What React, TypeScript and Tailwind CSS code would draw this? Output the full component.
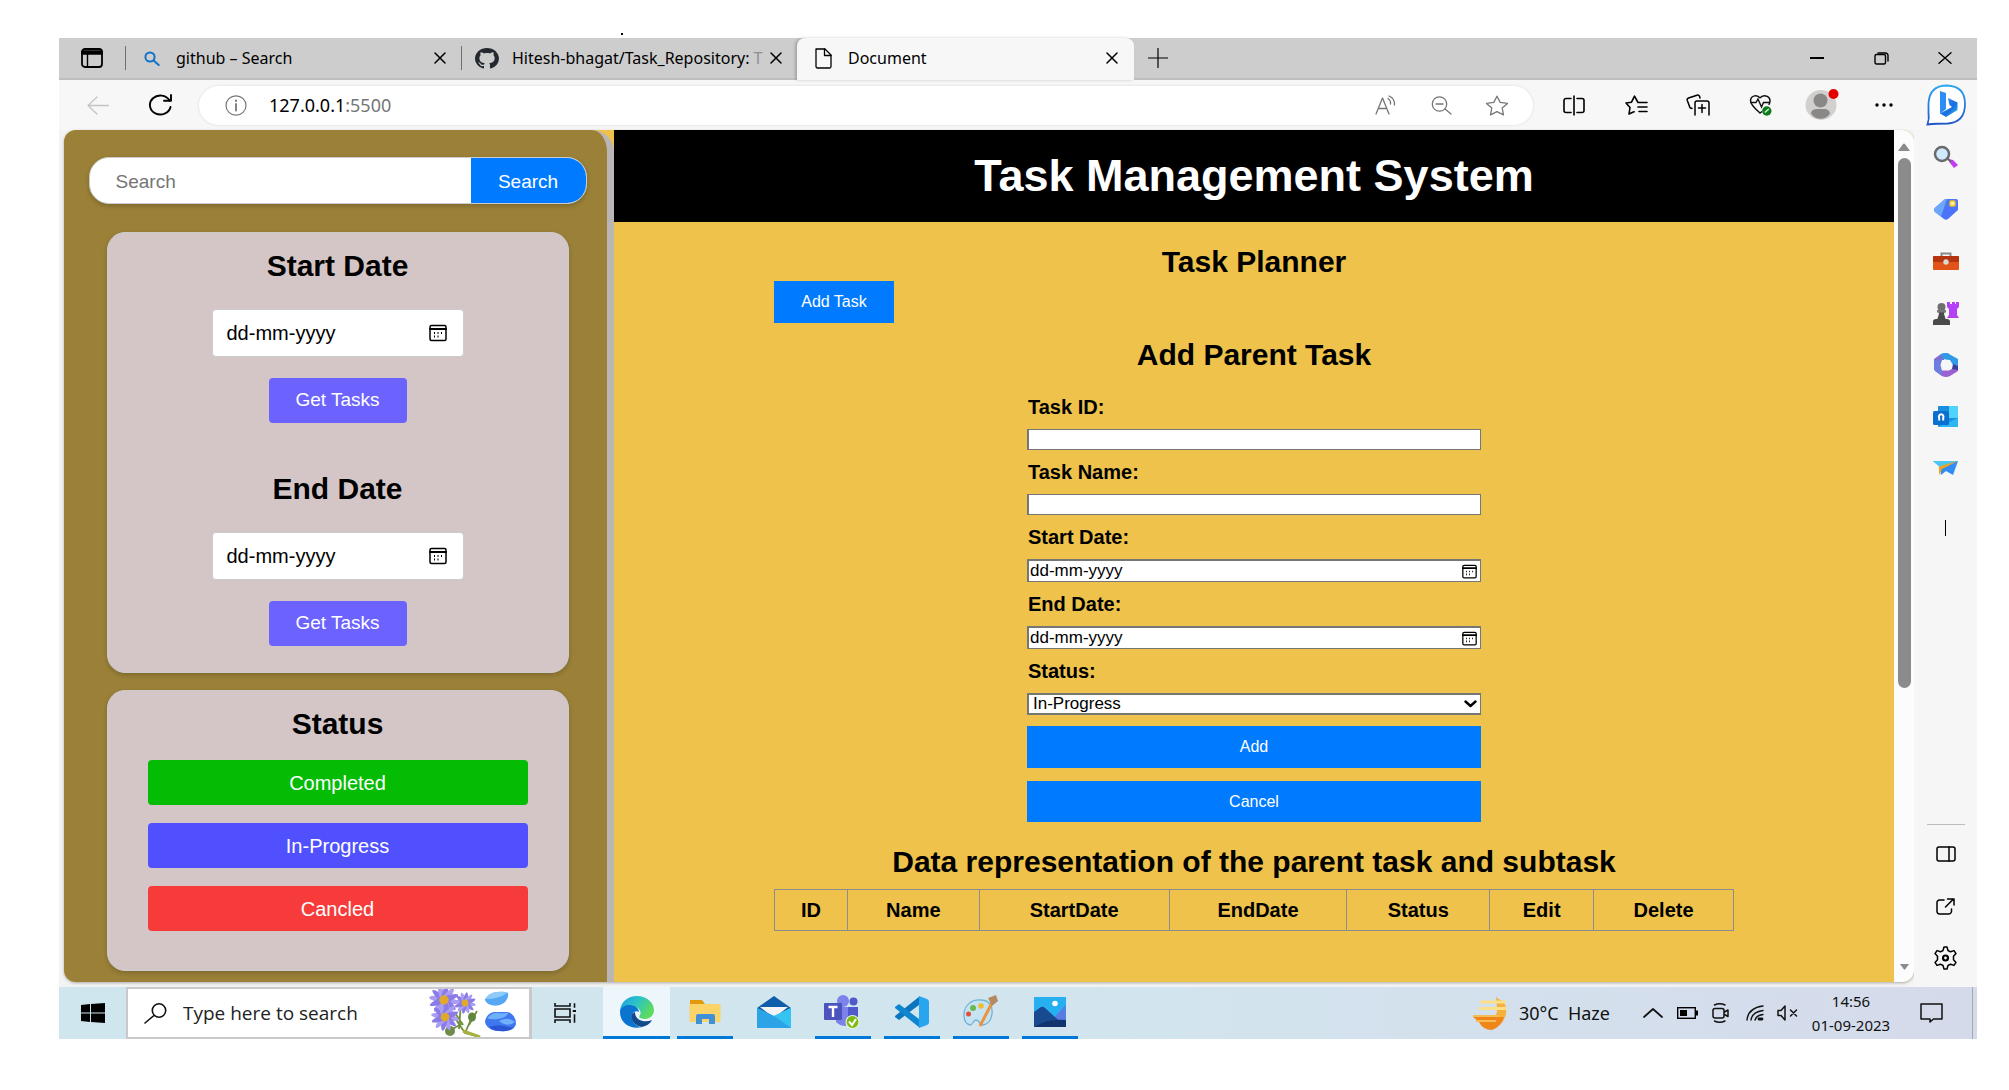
import type { ReactNode } from "react";

type IconProps = { children: ReactNode; w?: number; h?: number; box?: string; sw?: number };

function Line({ children, w = 24, h = 24, box = "0 0 24 24", sw = 1.6 }: IconProps) {
  return (
    <svg width={w} height={h} viewBox={box} fill="none" stroke="currentColor" strokeWidth={sw} strokeLinejoin="round" strokeLinecap="round" aria-hidden="true">
      {children}
    </svg>
  );
}

function Art({ children, w = 26, h = 24, box = "0 0 26 24" }: IconProps) {
  return (
    <svg width={w} height={h} viewBox={box} aria-hidden="true">
      {children}
    </svg>
  );
}

function CloseIcon() {
  return (
    <Line w={12} h={12} box="0 0 12 12" sw={1.5}>
      <path d="M1 1l10 10M11 1L1 11" />
    </Line>
  );
}

function CalendarIcon({ small }: { small?: boolean }) {
  return (
    <Line w={small ? 15 : 18} h={small ? 15 : 18} box="0 0 18 18" sw={1.5}>
      <rect x="1" y="1.5" width="16" height="15" rx="1.5" />
      <path d="M1 5h16" strokeWidth="2" />
      <path d="M5 9h1M8.5 9h1M12 9h1M5 12.500h1M8.500 12.500h1" strokeWidth="2" strokeLinecap="butt" />
    </Line>
  );
}

/* ---------- browser chrome ---------- */

function TabStrip() {
  return (
    <div className="flex h-[42px] border-b-2 border-[#bebebe] bg-[#cdcdcd]">
      <button aria-label="Tab actions" className="flex w-[66px] shrink-0 items-center justify-center">
        <Line w={22} h={20} box="0 0 22 20" sw={1.8}>
          <rect x="1" y="1" width="20" height="18" rx="3" />
          <path d="M2 4.500h18" strokeWidth="4.500" />
          <path d="M6.500 5v14" strokeWidth="1.400" />
        </Line>
      </button>
      <div className="my-2 w-px shrink-0 bg-[#707070]" />
      <div className="flex w-[335px] shrink-0 items-center pr-[15px] pl-[18px]">
        <span className="text-[#1173c7]">
          <Line w={16} h={15} box="0 0 16 15" sw={2}>
            <circle cx="6" cy="6" r="4.600" />
            <path d="M9.700 9.500l5 4.500" />
          </Line>
        </span>
        <span className="ml-4 flex-1 text-base">github – Search</span>
        <button aria-label="Close tab"><CloseIcon /></button>
      </div>
      <div className="my-2 w-px shrink-0 bg-[#707070]" />
      <div className="flex w-[335px] shrink-0 items-center pr-[15px] pl-[13px]">
        <svg width="24" height="21" viewBox="0 0 16 16" preserveAspectRatio="none" fill="#24292f" aria-hidden="true">
          <path d="M8 0C3.580 0 0 3.580 0 8c0 3.540 2.290 6.530 5.470 7.590.4.070.55-.17.55-.38 0-.19-.01-.82-.01-1.490-2.010.37-2.530-.49-2.690-.94-.09-.23-.48-.94-.82-1.130-.28-.15-.68-.52-.01-.53.63-.01 1.080.58 1.230.82.72 1.210 1.870.87 2.330.66.07-.52.28-.87.51-1.070-1.780-.2-3.640-.89-3.640-3.950 0-.87.31-1.590.82-2.150-.08-.2-.36-1.020.08-2.120 0 0 .67-.21 2.200.82.64-.18 1.320-.27 2-.27s1.360.09 2 .27c1.530-1.040 2.200-.82 2.200-.82.44 1.100.16 1.920.08 2.120.51.56.82 1.270.82 2.150 0 3.070-1.870 3.750-3.650 3.950.29.25.54.73.54 1.480 0 1.070-.01 1.930-.01 2.200 0 .21.15.46.55.38A8.010 8.010 0 0016 8c0-4.420-3.580-8-8-8z" />
        </svg>
        <span className="ml-[13px] min-w-0 flex-1 text-base whitespace-nowrap">
          Hitesh-bhagat/Task_Repository: <span className="text-[#909090]">T</span>
        </span>
        <button aria-label="Close tab"><CloseIcon /></button>
      </div>
      <div className="-mb-0.5 flex w-[337px] shrink-0 items-center rounded-t-lg bg-[#f7f7f7] pr-4 pb-0.5 pl-[18px] shadow-[-2px_0_3px_rgba(0,0,0,0.2)]">
        <Line w={17} h={21} box="0 0 17 21" sw={1.3}>
          <path d="M1 1h9l6 6v11.500a1.500 1.500 0 0 1-1.500 1.500h-12A1.500 1.500 0 0 1 1 18.500z" />
          <path d="M9.500 1v6.500H16" />
        </Line>
        <span className="ml-4 flex-1 text-base">Document</span>
        <button aria-label="Close tab"><CloseIcon /></button>
      </div>
      <button aria-label="New tab" className="flex w-[47px] items-center justify-center">
        <Line w={20} h={20} box="0 0 20 20" sw={1.2}><path d="M10 0.500v19M0.500 10h19" /></Line>
      </button>
      <div className="ml-auto flex">
        <button aria-label="Minimize" className="flex w-16 items-center justify-center">
          <span className="h-0.5 w-[14px] bg-black" />
        </button>
        <button aria-label="Restore" className="flex w-16 items-center justify-center">
          <Line w={15} h={13} box="0 0 15 13" sw={1.4}>
            <rect x="1" y="2.500" width="10.500" height="9.500" rx="1.500" />
            <path d="M4 1h7.500A2.500 2.500 0 0 1 14 3.500V9" />
          </Line>
        </button>
        <button aria-label="Close" className="flex w-16 items-center justify-center">
          <Line w={14} h={12} box="0 0 14 12" sw={1.4}><path d="M1 0.700l12 10.600M13 0.700L1 11.300" /></Line>
        </button>
      </div>
    </div>
  );
}

const TOOL = "flex w-[62px] items-center justify-center";

function Toolbar() {
  return (
    <div className="flex h-[50px] items-center bg-[#f7f7f7]">
      <button aria-label="Back" className="ml-2 flex w-[62px] items-center justify-center text-[#c4c4c4]">
        <Line w={22} h={19} box="0 0 22 19" sw={1.3}><path d="M10 1L1 9.500l9 8.500M1 9.500h20.500" /></Line>
      </button>
      <button aria-label="Reload" className={TOOL}>
        <Line w={25} h={22} box="0 0 25 22" sw={1.9}>
          <path d="M22.500 13A10.400 9.500 0 1 1 21.500 6.500" />
          <path d="M23 1v5.800h-7" />
        </Line>
      </button>
      <div className="ml-2 flex h-[39px] flex-1 items-center rounded-[20px] bg-white pr-[9px] pl-[26px] shadow-[0_0_3px_rgba(0,0,0,0.12)]">
        <span className="text-[#767676]">
          <Line w={22} h={21} box="0 0 22 21" sw={1.2}>
            <ellipse cx="11" cy="10.500" rx="10" ry="9.700" />
            <path d="M11 9v6.500" strokeWidth="1.800" />
            <path d="M11 5.500v.5" strokeWidth="2" />
          </Line>
        </span>
        <span className="ml-[22px] text-lg">127.0.0.1<span className="text-[#767676]">:5500</span></span>
        <div className="ml-auto flex text-[#767676]">
          <button aria-label="Read aloud" className="flex w-[55px] items-center justify-center">
            <Line w={24} h={20} box="0 0 24 20" sw={1.3}>
              <path d="M1 19L7.500 3 14 19M3.200 13.500h8.600" />
              <path d="M13 3.500q3 2 2.500 5.500M14 1q6 2.500 5.500 9" />
            </Line>
          </button>
          <button aria-label="Zoom out" className="flex w-[55px] items-center justify-center">
            <Line w={21} h={19} box="0 0 21 19" sw={1.3}>
              <circle cx="8.500" cy="8" r="7.200" />
              <path d="M5 8h7M14 13l6 5" />
            </Line>
          </button>
          <button aria-label="Favorite" className="flex w-[55px] items-center justify-center">
            <Line w={24} h={21} box="0 0 24 21" sw={1.3}>
              <path d="M12 1.200l3.200 6.200 7.300 1-5.300 4.600 1.300 6.900L12 16.700l-6.500 3.200 1.300-6.900L1.500 8.400l7.300-1z" />
            </Line>
          </button>
        </div>
      </div>
      <div className="ml-[10px] flex">
        <button aria-label="Split screen" className={TOOL}>
          <Line w={22} h={21} box="0 0 22 21" sw={1.6}>
            <path d="M8 3.500H3A2 2 0 0 0 1 5.500v10a2 2 0 0 0 2 2h5M14 3.500h5a2 2 0 0 1 2 2v10a2 2 0 0 1-2 2h-5M11 1v19" />
          </Line>
        </button>
        <button aria-label="Favorites" className={TOOL}>
          <Line w={23} h={21} box="0 0 23 21" sw={1.6}>
            <path d="M14 7.500h-1L9.500 1.200 6.500 7.200 1 8l4 4.500-1 6.500 5-2.300M14.500 7.500H22M13 12h9M14 16.500h8" />
          </Line>
        </button>
        <button aria-label="Collections" className={TOOL}>
          <Line w={24} h={22} box="0 0 24 22" sw={1.5}>
            <path d="M9 21V9a2 2 0 0 1 2-2h10a2 2 0 0 1 2 2v12M12.500 14h7M16 10.500v8" />
            <path d="M6 14.500l-2-.8L1.300 6.500A2 2 0 0 1 2.500 4L11 1.200A2 2 0 0 1 13.500 2.300L14 4" />
          </Line>
        </button>
        <button aria-label="Browser essentials" className={TOOL}>
          <Art w={23} h={22} box="0 0 23 22">
            <path d="M11 4C8.500.5 2 1 1.500 6.500c0 4.500 5 8.500 9.500 12.500l2-1.500M11 4c2.500-3.500 10-3 10 3 0 1.500-.5 2.700-1.200 3.900" fill="none" stroke="#111" strokeWidth="1.500" />
            <path d="M1.500 8.500H7L9 5l3.500 8 2-4.500h6.500" fill="none" stroke="#111" strokeWidth="1.400" />
            <circle cx="17.800" cy="17" r="4.700" fill="#0f7b1c" />
            <path d="M15.800 18.500l4-3.500" stroke="#d9f2d9" strokeWidth="1.400" />
          </Art>
        </button>
        <button aria-label="Profile" className={TOOL}>
          <Art w={34} h={34} box="0 0 34 34">
            <ellipse cx="16" cy="17" rx="15.500" ry="15" fill="#d2d0ce" />
            <circle cx="15.500" cy="12.500" r="7" fill="#8a8886" />
            <path d="M6 25.500c1-5 5-4.500 9.500-4.500s8.500-.5 9.500 4.500c-4 7-15 7-19 0z" fill="#8a8886" />
            <circle cx="28.500" cy="6" r="5" fill="#e50000" />
          </Art>
        </button>
        <button aria-label="More" className={TOOL}>
          <Art w={20} h={4} box="0 0 20 4">
            <circle cx="3" cy="2" r="1.700" /><circle cx="10" cy="2" r="1.700" /><circle cx="17" cy="2" r="1.700" />
          </Art>
        </button>
        <button aria-label="Bing chat" className={TOOL}>
          <Art w={40} h={42} box="0 0 40 42">
            <defs>
              <linearGradient id="bingB" x1="0" y1="0" x2="1" y2="1"><stop offset="0" stopColor="#2b8df5" /><stop offset="0.600" stopColor="#1b6fe0" /><stop offset="1" stopColor="#2bd0f0" /></linearGradient>
              <linearGradient id="bingR" x1="0" y1="0" x2="0" y2="1"><stop offset="0" stopColor="#2fa9ee" /><stop offset="1" stopColor="#1f55c8" /></linearGradient>
            </defs>
            <path d="M1.500 40.500q2-6 1-12V20Q3 1.500 21 1.500 39 2 39 20t-17 19.500q-12 0-20.500 1z" fill="#fff" stroke="url(#bingR)" strokeWidth="1.800" />
            <path d="M14 7l6 2v16l-6 5z" fill="#2b8df5" />
            <path d="M22 14l9.500 4.500v7.500L20 33l-6-3.500L26 23l-2.500-2z" fill="url(#bingB)" />
          </Art>
        </button>
      </div>
    </div>
  );
}

function SideRail() {
  const cell = "flex h-[52px] w-full items-center justify-center";
  return (
    <nav aria-label="Sidebar" className="flex w-[63px] shrink-0 flex-col items-center bg-[#f6f6f6] pt-px pb-[3px]">
      <button aria-label="Search" className={cell}>
        <Art>
          <path d="M16 14l4 1 5 5-4 3-4-5z" fill="#c23cf5" />
          <path d="M14 13l4 4" stroke="#666" strokeWidth="2" />
          <circle cx="9" cy="9" r="7" fill="#cfeafc" stroke="#6a6a6a" strokeWidth="2.500" />
        </Art>
      </button>
      <button aria-label="Shopping" className={cell}>
        <Art>
          <path d="M12 2h11a2 2 0 0 1 2 2v9L15 22q-2 1.500-4 0l-9-7q-2-2 0-4z" fill="#4b74f8" />
          <path d="M1.500 11q-1.500 2 .5 4l6 4.500L14 2h-2z" fill="#6ea6fb" />
          <rect x="17" y="4" width="5" height="5" rx="1" fill="#fff3b0" stroke="#f0c020" strokeWidth="1.500" />
        </Art>
      </button>
      <button aria-label="Tools" className={cell}>
        <Art>
          <path d="M8.500 8V4.500h9V8" fill="none" stroke="#8a8a8a" strokeWidth="2" />
          <rect x="0" y="7" width="26" height="14" rx="1" fill="#e2531a" />
          <path d="M0 8a1 1 0 0 1 1-1h24a1 1 0 0 1 1 1v5H0z" fill="#b5330f" />
          <circle cx="13" cy="13" r="2.700" fill="#d8d8d8" />
        </Art>
      </button>
      <button aria-label="Games" className={cell}>
        <Art>
          <path d="M14 1h3v2h2V1h3v2h1V1h3v5l-2 2v6l2 3H14l2-3V8l-2-2z" fill="#b53ff5" />
          <path d="M5 10h7l-1 3 2 6H4l2-6zM0 20.500q0-2.500 3-2.500h11q3 0 3 2.500V24H0z" fill="#4a4a4a" />
          <circle cx="8.500" cy="6" r="4" fill="#6f6f6f" />
          <rect x="4" y="9" width="9" height="2.500" fill="#777" />
        </Art>
      </button>
      <button aria-label="Microsoft 365" className={cell}>
        <Art>
          <path d="M8 1l8-1-5 5v7l-3 6-7-1V6z" fill="#7b6fd6" />
          <path d="M8 1q4-2 8 0l9 5v8l-5-1-4-6-6-1z" fill="#2f9be6" />
          <path d="M25 12v6l-8 5q-4 2-8 0l-7-5 7-1 8 0z" fill="#9a62d0" />
          <path d="M1 7v10l8 6 0-6-1-9z" fill="#6c7fe0" />
          <path d="M9 7h8l3 5-4 5.500H9L7.500 12z" fill="#f6f6f6" />
          <path d="M20 11l5 2v4l-6-1z" fill="#3c3fa0" />
        </Art>
      </button>
      <button aria-label="Outlook" className={cell}>
        <Art>
          <rect x="5" y="1" width="20" height="21" rx="1" fill="#1a8fe0" />
          <path d="M16 1h9v12h-9z" fill="#50d3fb" />
          <path d="M5 22l20-9v9z" fill="#2cb6f2" />
          <rect x="0" y="6" width="16" height="14" rx="1.500" fill="#0a6fd0" />
          <path d="M6.200 15.500v-2.800a2.300 2.300 0 1 1 4 0v2.800" fill="none" stroke="#fff" strokeWidth="2" />
        </Art>
      </button>
      <button aria-label="Drop" className={cell}>
        <Art>
          <path d="M0 4h25l-5 14-7-4-5 4-1-8z" fill="#2f8df5" />
          <path d="M0 4h25l-18 6z" fill="#4cc8f2" />
          <path d="M25 4L6 9.500v9L9 12z" fill="#f5a11a" />
        </Art>
      </button>
      <div className="mt-[25px] h-4 w-px bg-black" />
      <div className="mt-auto h-px w-[38px] bg-[#bdbdbd]" />
      <div className="h-[3px]" />
      <button aria-label="Hide sidebar" className={cell}>
        <Line w={20} h={16} box="0 0 20 16" sw={1.5}><rect x="1" y="1" width="18" height="14" rx="2" /><path d="M13 1v14" /></Line>
      </button>
      <button aria-label="Open link" className={cell}>
        <Line w={19} h={17} box="0 0 19 17" sw={1.5}>
          <path d="M8 2H3.500A2.500 2.500 0 0 0 1 4.500v9A2.500 2.500 0 0 0 3.500 16h9a3 3 0 0 0 3-2.500V11M9.500 9L17 1.500M11.500 1H18v6" />
        </Line>
      </button>
      <button aria-label="Settings" className={cell}>
        <Line w={25} h={24} sw={1.5}>
          <path d="M9.500 4.500L10.500 1h3l1 3.500 2.500 1.300 3.500-1.200 2 3-2.500 2.700v3.400l2.500 2.700-2 3-3.500-1.200-2.500 1.300-1 3.500h-3l-1-3.500L7 18.200l-3.500 1.200-2-3L4 13.700v-3.400L1.500 7.600l2-3L7 5.800z" />
          <circle cx="12" cy="12" r="2.500" strokeWidth="2.200" />
        </Line>
      </button>
    </nav>
  );
}

/* ---------- page ---------- */

function DateFilter({ title, id }: { title: string; id: string }) {
  return (
    <section className="flex flex-col items-center">
      <h2 className="text-[30px] leading-9 font-bold"><label htmlFor={id}>{title}</label></h2>
      <div className="mt-[25px] flex h-[48px] w-[252px] items-center rounded border border-[#ccc] bg-white pr-4 pl-[14px]">
        <input id={id} placeholder="dd-mm-yyyy" className="min-w-0 flex-1 bg-transparent text-xl outline-none placeholder:text-black" />
        <button aria-label={`Pick ${title}`}><CalendarIcon /></button>
      </div>
      <button className="mt-[21px] h-[45px] w-[138px] rounded bg-[#6c63ff] text-[19px] text-white">Get Tasks</button>
    </section>
  );
}

function FilterPanel() {
  const card = "mx-auto w-[462px] rounded-[18px] border border-[#ccc] bg-[#d4c6c7] shadow-[0_2px_5px_rgba(0,0,0,0.2)]";
  const status = "h-[45px] rounded text-xl text-white";
  return (
    <aside className="w-[550px] shrink-0 rounded-tr-[22px] border-r-[7px] border-[#bbb6b6] bg-[#9b8138] pt-[27px] pb-[11px] pl-1">
      <form className="mx-auto flex h-[47px] w-[498px] overflow-hidden rounded-[20px] border border-[#ccc] bg-white shadow-[0_2px_5px_rgba(0,0,0,0.2)]">
        <input aria-label="Search" placeholder="Search" className="min-w-0 flex-1 pt-[3px] pl-[26px] text-[19px] outline-none placeholder:text-[#757575]" />
        <button type="button" className="w-[115px] bg-[#007bff] pt-[3px] text-[19px] text-white">Search</button>
      </form>
      <div className={`${card} mt-[28px] pt-[15px] pb-[26px]`}>
        <DateFilter title="Start Date" id="filter-start" />
        <hr className="mx-auto mt-[24px] mb-[22px] w-[360px] border-t-2 border-[#cec5c6]" />
        <DateFilter title="End Date" id="filter-end" />
      </div>
      <div className={`${card} mt-[17px] flex flex-col px-10 pt-[15px] pb-[39px]`}>
        <h2 className="mb-[18px] text-center text-[30px] leading-9 font-bold">Status</h2>
        <div className="flex flex-col gap-[18px]">
          <button className={`${status} bg-[#04bc04]`}>Completed</button>
          <button className={`${status} bg-[#5050ff]`}>In-Progress</button>
          <button className={`${status} bg-[#f73b3b]`}>Cancled</button>
        </div>
      </div>
    </aside>
  );
}

const LABEL = "block py-[10px] pl-px text-xl leading-6 font-bold";

function TextField({ label, id }: { label: string; id: string }) {
  return (
    <div>
      <label htmlFor={id} className={LABEL}>{label}</label>
      <input id={id} className="block h-[21px] w-full border border-l-2 border-[#767676] bg-white px-1 text-[17px] outline-none" />
    </div>
  );
}

function DateField({ label, id }: { label: string; id: string }) {
  return (
    <div>
      <label htmlFor={id} className={LABEL}>{label}</label>
      <div className="flex h-[23px] items-center border border-t-2 border-l-2 border-[#767676] bg-white pr-[3px] pl-px">
        <input id={id} placeholder="dd-mm-yyyy" className="h-5 min-w-0 flex-1 text-[17px] outline-none placeholder:text-black" />
        <button type="button" aria-label="Pick date"><CalendarIcon small /></button>
      </div>
    </div>
  );
}

const COLUMNS: [string, string][] = [
  ["ID", "w-[73px]"],
  ["Name", "w-[132px]"],
  ["StartDate", "w-[190px]"],
  ["EndDate", "w-[178px]"],
  ["Status", "w-[143px]"],
  ["Edit", "w-[104px]"],
  ["Delete", "w-[140px]"],
];

function Planner() {
  const blue = "bg-[#007bff] text-base text-white";
  return (
    <main className="min-w-0 flex-1">
      <h1 className="flex h-[92px] items-center justify-center bg-black text-[45px] font-bold text-white">Task Management System</h1>
      <div className="mx-auto w-3/4 pt-[22px] pb-12">
        <h2 className="text-center text-[30px] leading-9 font-bold">Task Planner</h2>
        <button className={`${blue} mt-px block h-[42px] w-[120px]`}>Add Task</button>
        <h2 className="mt-[14px] text-center text-[30px] leading-9 font-bold">Add Parent Task</h2>
        <form className="mx-auto mt-3 w-[454px]">
          <TextField label="Task ID:" id="task-id" />
          <TextField label="Task Name:" id="task-name" />
          <DateField label="Start Date:" id="task-start" />
          <DateField label="End Date:" id="task-end" />
          <label htmlFor="task-status" className={LABEL}>Status:</label>
          <div className="relative">
            <select id="task-status" className="block h-[22px] w-full appearance-none border border-y-2 border-l-2 border-[#767676] bg-white pl-1 text-[17px] leading-[18px]">
              <option>In-Progress</option>
              <option>Completed</option>
              <option>Cancled</option>
            </select>
            <span className="pointer-events-none absolute top-[7px] right-[4px]">
              <Line w={13} h={8} box="0 0 13 8" sw={2.4}><path d="M1.500 1.500l5 4.500 5-4.500" /></Line>
            </span>
          </div>
          <button type="button" className={`${blue} mt-[11px] block h-[42px] w-full`}>Add</button>
          <button type="button" className={`${blue} mt-[13px] block h-[41px] w-full`}>Cancel</button>
        </form>
        <h2 className="mt-[22px] text-center text-[30px] leading-9 font-bold whitespace-nowrap">Data representation of the parent task and subtask</h2>
        <table className="mt-[9px] w-full border-collapse">
          <thead>
            <tr className="h-[41px]">
              {COLUMNS.map(([name, width]) => (
                <th key={name} scope="col" className={`${width} border border-[#8d8d8d] text-xl leading-6 font-bold`}>{name}</th>
              ))}
            </tr>
          </thead>
        </table>
      </div>
    </main>
  );
}

function ScrollTrack() {
  return (
    <div className="flex w-5 shrink-0 flex-col items-center bg-[#fcfcfc] pt-[13px] pb-3" aria-hidden="true">
      <Art w={12} h={8} box="0 0 12 8"><path d="M0 8l5-7q1-1 2 0l5 7z" fill="#8b8b8b" /></Art>
      <div className="mt-[7px] h-[530px] w-[13px] rounded-full bg-[#8b8b8b]" />
      <span className="mt-auto"><Art w={11} h={6} box="0 0 12 8"><path d="M0 0l5 7q1 1 2 0l5-7z" fill="#8b8b8b" /></Art></span>
    </div>
  );
}

/* ---------- task bar ---------- */

function AppButton({ label, open = true, children }: { label: string; open?: boolean; children: ReactNode }) {
  return (
    <button aria-label={label} className="flex w-[69px] flex-col items-center">
      <span className="flex flex-1 items-center justify-center">{children}</span>
      <span className={open ? "h-[3px] w-14 bg-[#0078d7]" : "h-[3px] w-14"} />
    </button>
  );
}

const PETALS = [0, 30, 60, 90, 120, 150];

function Daisy({ x, y, r }: { x: number; y: number; r: number }) {
  return (
    <g transform={`translate(${x} ${y})`}>
      {PETALS.map((a) => (
        <ellipse key={a} rx={r} ry={r / 4.5} fill={a % 60 ? "#8a7be8" : "#a99cf3"} transform={`rotate(${a + 10})`} />
      ))}
      <circle r={r / 3.2} fill="#e0a92c" />
    </g>
  );
}

function FlowerArt() {
  return (
    <Art w={92} h={48} box="0 0 92 48">
      <path d="M18 14L38 44l15 4M34 14l-2 26M45 28l-7 16M22 42l14-8M28 24l8 12M50 22l-8 14" stroke="#6f8f3a" strokeWidth="1.800" fill="none" />
      <path d="M36 42l17 6" stroke="#a9b040" strokeWidth="3" />
      <ellipse cx="45" cy="28" rx="4" ry="4.500" fill="#62853f" />
      <ellipse cx="23" cy="42" rx="5" ry="5" fill="#6e8b4c" />
      <Daisy x={17} y={11} r={15} />
      <Daisy x={38} y={14} r={11} />
      <Daisy x={18} y={28} r={14} />
      <path d="M58 10q4-6 12-7 8-1 11 1 1 5-4 10-6 4-13 2-6-2-6-6z" fill="#56a8f5" />
      <path d="M58 10q5-7 12-7 8-1 10 1-8 6-22 6z" fill="#8ecbfb" />
      <path d="M58 32q2-8 9-9h14q8 3 8 12-1 6-10 7-12 1-17-3-4-3-4-7z" fill="#3f78ee" />
      <path d="M60 29q6-6 12-5t10-1q-3 6-11 7-7 1-11-1zM72 32q9-5 16 1-7 6-16-1z" fill="#6fb0fb" />
      <path d="M62 38q8-3 15-1t10 1q-5 5-13 4-8 0-12-4z" fill="#2c55d6" />
    </Art>
  );
}

function Taskbar() {
  const tray = "flex w-[34px] items-center justify-center";
  return (
    <footer className="flex h-[52px] bg-linear-to-r from-[#cfe6ee] via-[#d2e5ef] via-55% to-[#d5daea] font-['Noto_Sans','Open_Sans',sans-serif] text-[#111]">
      <button aria-label="Start" className="flex w-[67px] shrink-0 items-center justify-center">
        <Art w={24} h={20} box="0 0 24 20"><path d="M0 2l9-1v8.500H0zM10 1l14-1v9.500H10zM0 10.500h9V19l-9-1zM10 10.500h14V20l-14-1z" fill="#000" /></Art>
      </button>
      <label className="flex w-[406px] shrink-0 items-center border-2 border-r-[3px] border-[#c9c9cb] bg-white pr-[10px] pl-4">
        <Line w={23} h={21} box="0 0 23 21" sw={1.6}><circle cx="15" cy="7.500" r="6.700" /><path d="M10 12.500l-9 7.500" /></Line>
        <input placeholder="Type here to search" className="ml-[16px] w-0 min-w-0 flex-1 font-['Open_Sans',sans-serif] text-[19px] outline-none placeholder:text-[#222]" />
        <FlowerArt />
      </label>
      <button aria-label="Task view" className="mr-[6px] flex w-[65px] shrink-0 items-center justify-center">
        <Line w={22} h={20} box="0 0 22 20" sw={1.6}>
          <path d="M1 .5V3h15V.5M1 6h15v8H1zM1 19.500V17h15v2.500M20.500 1v3M20.500 12v7" strokeLinecap="square" strokeLinejoin="miter" />
          <path d="M20.500 7v2" strokeWidth="3.500" strokeLinecap="butt" />
        </Line>
      </button>
      <button aria-label="Microsoft Edge" className="flex w-[67px] shrink-0 flex-col items-stretch bg-[#edf6fa]">
        <span className="flex flex-1 items-center justify-center">
          <Art w={34} h={32} box="0 0 34 32">
            <defs>
              <linearGradient id="edgeTop" x1="0" y1="0" x2="1" y2="0.500"><stop offset="0" stopColor="#1b9de2" /><stop offset="0.500" stopColor="#2bc3c8" /><stop offset="1" stopColor="#5edb5b" /></linearGradient>
            </defs>
            <path d="M0 16C0 6 8 0 17 0c10 0 17 7 17 14 0 6-5 9-9 9-5 0-7-2-5-4 2-3-1-8-6-8C7 11 0 13 0 16z" fill="url(#edgeTop)" />
            <path d="M0 16C0 12 4 9 9 9c7 0 10 4 10 7-3-2-8 1-7 6 1 6 6 9 10 9C10 34 0 27 0 16z" fill="#0b74d1" />
            <path d="M12 18c-2 6 3 12 10 13 4-1 8-3 10-7-7 3-17 1-17-8z" fill="#124a8c" />
          </Art>
        </span>
        <span className="h-[3px] bg-[#0078d7]" />
      </button>
      <AppButton label="File Explorer">
        <Art w={32} h={24} box="0 0 32 24">
          <path d="M1 0h12l3 4v4H1z" fill="#e29a0c" />
          <rect x="0.500" y="4" width="31" height="18" rx="1" fill="#fbd469" />
          <path d="M7 24v-8q0-2 2-2h15q2 0 2 2v8h-6v-5h-7v5z" fill="#3f8fd9" />
        </Art>
      </AppButton>
      <AppButton label="Mail" open={false}>
        <Art w={34} h={32} box="0 0 34 32">
          <path d="M0 12L17 0l17 12v6H0z" fill="#0f5ea9" />
          <path d="M3 11h28L17 22z" fill="#f4f4f4" />
          <path d="M0 12l17 8 17-8v20H0z" fill="#38b4ee" />
          <path d="M17 20l17 12V12z" fill="#35c3f1" />
          <path d="M17 20l17 12H0V12z" fill="#2ba3e6" />
        </Art>
      </AppButton>
      <AppButton label="Teams">
        <Art w={40} h={34} box="0 0 40 34">
          <circle cx="20" cy="6" r="6" fill="#7b83eb" /><circle cx="30.500" cy="6.500" r="4" fill="#5059c9" />
          <path d="M13 12h15v18q-9 3-15-3z" fill="#7b83eb" /><path d="M25 12h10v12l-6 5h-4z" fill="#5059c9" />
          <rect x="1" y="8" width="18" height="17" rx="1" fill="#4b53bc" />
          <path d="M5.500 12h9M10 12v10" stroke="#fff" strokeWidth="2.400" />
          <circle cx="29.500" cy="27" r="6.500" fill="#7cbb12" stroke="#e6f0e0" strokeWidth="1.200" />
          <path d="M26 26.500l3 3.500 4-6" stroke="#fff" strokeWidth="2" fill="none" />
        </Art>
      </AppButton>
      <AppButton label="Visual Studio Code">
        <Art w={34} h={32} box="0 0 34 32">
          <path d="M25 0l-1 9L4 24l-4-3 0-1z" fill="#0b76bf" />
          <path d="M0 11l4-3 20 15 1 9L0 12z" fill="#0f87d0" />
          <path d="M24 0l8 3q2 1 2 2.500v21q0 1.500-2 2.500l-8 3z" fill="#27a5ef" />
        </Art>
      </AppButton>
      <AppButton label="Paint">
        <Art w={36} h={34} box="0 0 36 34">
          <path d="M1 20C1 10 9 4 18 5c8 0 12 6 11 14-1 7-5 11-10 11-3-2-3-5-6-5s-3 5-6 5c-4-1-6-5-6-10z" fill="#c5e3f3" stroke="#6eb3d3" strokeWidth="1.300" />
          <circle cx="5.500" cy="19" r="2.500" fill="#e04e3c" /><circle cx="10" cy="13" r="3" fill="#6cb84c" /><circle cx="18" cy="11" r="2.800" fill="#f0bd32" />
          <path d="M32 2L17 31" stroke="#ee923e" strokeWidth="3" />
          <path d="M25 3l8-3 2 6-6 5z" fill="#b58a60" />
        </Art>
      </AppButton>
      <AppButton label="Photos">
        <Art w={32} h={30} box="0 0 32 30">
          <rect width="32" height="30" fill="#26b0ef" />
          <path d="M31.500 8L17 24l15 4z" fill="#5a7be0" />
          <path d="M0 15l7-5q2-1 4 1l21 19H0z" fill="#194a90" />
          <path d="M0 30q14-9 32-7v7z" fill="#12346e" />
          <circle cx="21" cy="6.500" r="2.800" fill="#fff" />
        </Art>
      </AppButton>
      <div className="ml-auto flex">
        <button className="flex items-center text-lg">
          <Art w={34} h={34} box="0 0 34 34">
            <path d="M23 0q1 3 5 4 6 3 5 14-3 12-14 15-10 0-14-9h11q9-3 8-12z" fill="#f5b13c" />
            <path d="M0 21h31q-3 10-12 13-9 0-13-8z" fill="#f0861a" />
            <path d="M7 6h26M6 12.500h28" stroke="#fbe08a" strokeWidth="3" />
            <path d="M0 20h26M3 25h20" stroke="#f6bd55" strokeWidth="2" />
          </Art>
          <span className="ml-3 whitespace-pre">30°C  Haze</span>
        </button>
        <div className="ml-[26px] flex">
          <button aria-label="Hidden icons" className={tray}><Line w={20} h={10} box="0 0 20 10" sw={1.7}><path d="M1 9l9-8 9 8" /></Line></button>
          <button aria-label="Battery" className={tray}>
            <Art w={21} h={12} box="0 0 21 12"><rect x="0.700" y="0.700" width="17.600" height="10.600" fill="none" stroke="#000" strokeWidth="1.400" /><path d="M3 3h7v6H3zM19 3.500h2v5h-2z" /></Art>
          </button>
          <button aria-label="Meet now" className={tray}>
            <Line w={18} h={20} box="0 0 18 20" sw={1.5}><rect x="1" y="5.500" width="11" height="9.500" rx="2" /><path d="M12.500 9l3.500-2v6.500l-3.500-2M2.500 2q5-2.500 10.500 0M2.500 18q5 2.500 10.500 0" /></Line>
          </button>
          <button aria-label="Network" className={tray}>
            <Line w={18} h={16} box="0 0 18 16" sw={1.4}><path d="M1 15Q2 3 17 1M5 15q1-8 12-9.500M9 15q1-4.500 8-5.500" /><path d="M13 14h3" strokeWidth="2.800" /></Line>
          </button>
          <button aria-label="Volume muted" className="flex w-[30px] items-center justify-center">
            <Line w={21} h={16} box="0 0 21 16" sw={1.5}><path d="M1 5.500h3L8 1v14l-4-4.500H1zM13.500 5l6 6M19.500 5l-6 6" /></Line>
          </button>
          <button className="flex w-[98px] flex-col items-center justify-center text-[15px] leading-6">
            <span>14:56</span>
            <span>01-09-2023</span>
          </button>
          <button aria-label="Notifications" className="flex w-[62px] items-center justify-center">
            <Line w={23} h={20} box="0 0 23 20" sw={1.5}><path d="M1 1h21v15h-8.500L10 19v-3H1z" /></Line>
          </button>
          <div className="mr-1 ml-[10px] w-px bg-[#a4a9b8]" />
        </div>
      </div>
    </footer>
  );
}

export default function App() {
  return (
    <div className="relative min-h-screen bg-white pt-[38px] pr-8 pl-[59px] font-['Liberation_Sans',Arial,sans-serif] text-black">
      <span className="absolute top-[33px] left-[621px] size-0.5 bg-black" />
      <header className="font-['Noto_Sans','Open_Sans',sans-serif]">
        <TabStrip />
        <Toolbar />
      </header>
      <div className="flex bg-[#f3f3f3]">
        <div className="mb-[5px] ml-[5px] flex min-w-0 flex-1 overflow-hidden rounded-xl bg-[#eec24b] shadow-[0_1px_3px_rgba(0,0,0,0.3)]">
          <FilterPanel />
          <Planner />
          <ScrollTrack />
        </div>
        <SideRail />
      </div>
      <Taskbar />
    </div>
  );
}
